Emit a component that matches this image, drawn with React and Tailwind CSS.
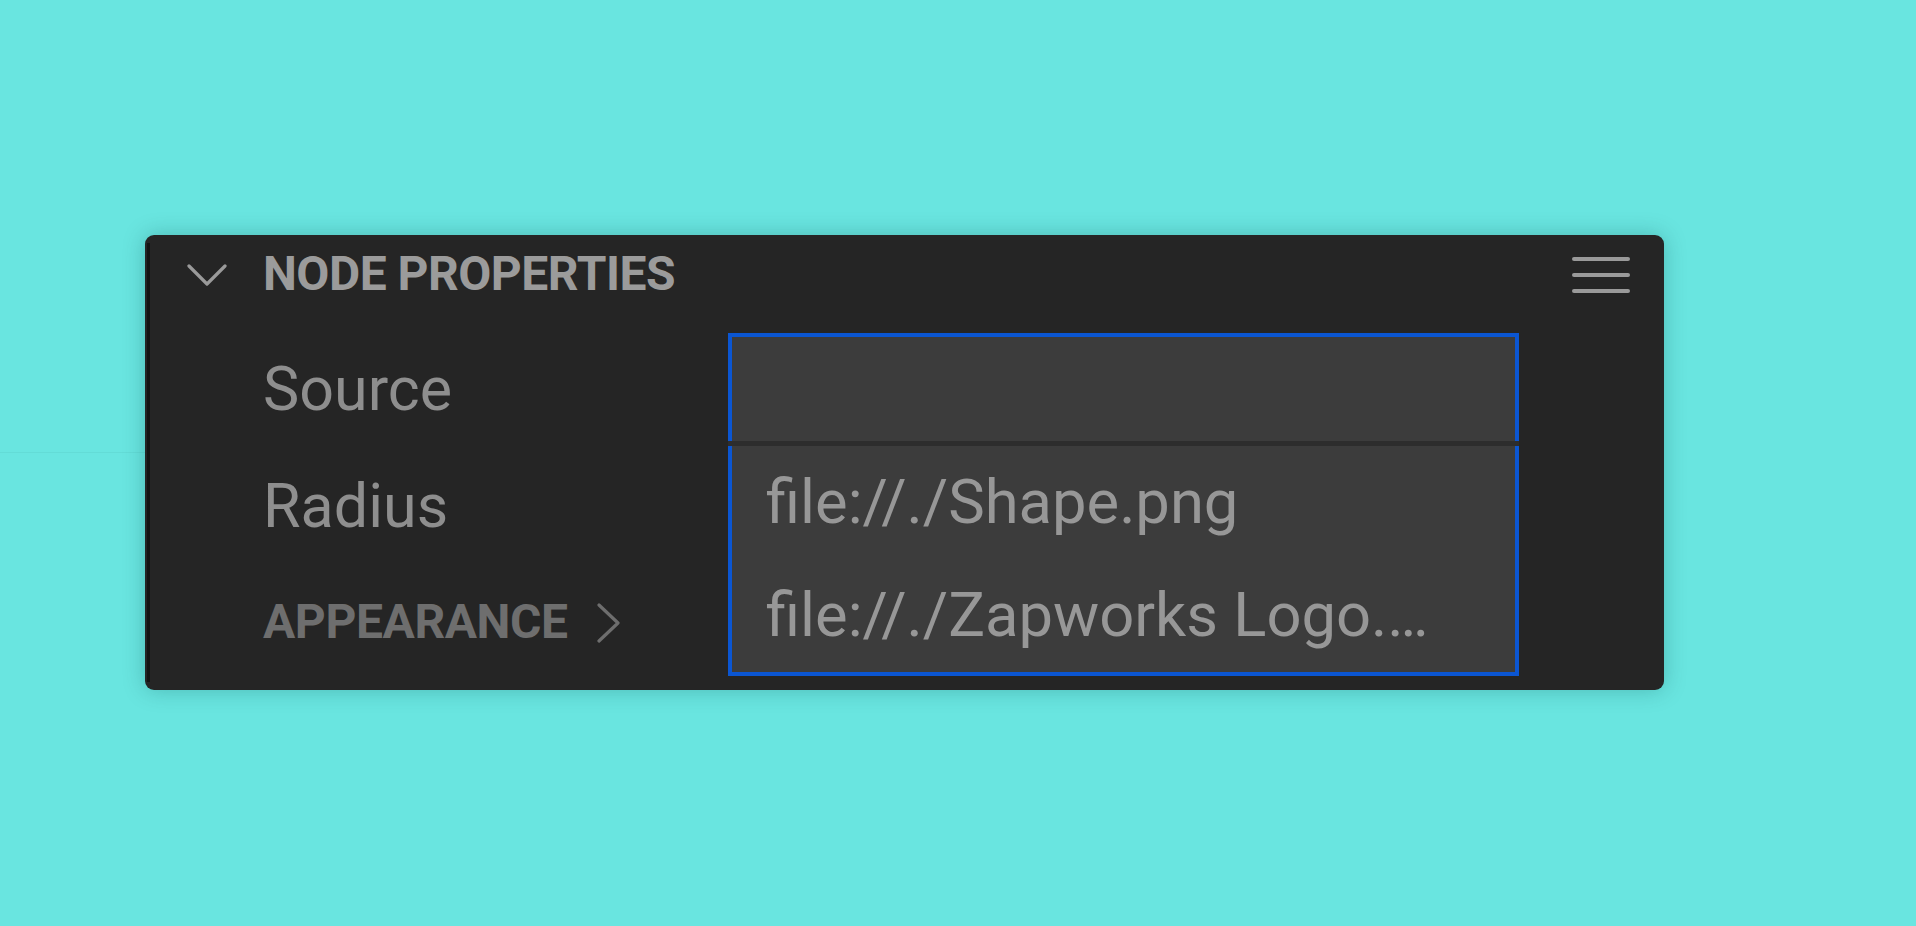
import React from "react";

const ChevronDown = () => (
  <svg width="40" height="24" viewBox="0 0 40 24" fill="none" stroke="#9a9a9a" strokeWidth="3.2" strokeLinecap="round" strokeLinejoin="round">
    <polyline points="2,3 20,21 38,3" />
  </svg>
);

const ChevronRight = () => (
  <svg width="26" height="40" viewBox="0 0 26 40" fill="none" stroke="#6e6e6e" strokeWidth="3.2" strokeLinecap="round" strokeLinejoin="round">
    <polyline points="3,2 22,20 3,38" />
  </svg>
);

const NodeProperties = () => {
  const options = ["file://./Shape.png", "file://./Zapworks Logo.png"];

  return (
    <div className="relative flex w-[1519px] rounded-[9px] bg-[#252525] shadow-[0_0_22px_rgba(0,70,70,0.28)]">
      {/* dark left edge */}
      <div className="my-[8px] ml-[2px] w-[3px] shrink-0 bg-[#141414]" />

      <div className="flex flex-1 flex-col pb-[14px]">
        {/* Header */}
        <div className="flex h-[78px] items-center">
          <div className="ml-[37px] mt-[2px] flex w-[76px] shrink-0">
            <ChevronDown />
          </div>
          <span className="text-[48px] font-bold tracking-[-0.5px] text-[#9b9b9b]">NODE PROPERTIES</span>
          <div className="ml-auto mr-[34px] mt-[2px] flex flex-col gap-[12px]">
            <span className="block h-[4px] w-[58px] rounded-full bg-[#9a9a9a]" />
            <span className="block h-[4px] w-[58px] rounded-full bg-[#9a9a9a]" />
            <span className="block h-[4px] w-[58px] rounded-full bg-[#9a9a9a]" />
          </div>
        </div>

        {/* Source row */}
        <div className="mt-[20px] flex h-[113px] items-center">
          <span className="w-[578px] shrink-0 pl-[113px] text-[61px] text-[#8e8e8e]">Source</span>
          <div className="relative z-10 flex h-full w-[791px] flex-col">
            <div className="h-[108px] border-[4px] border-b-0 border-[#0b56d2] bg-[#3c3c3c]" />
            <div className="h-[5px] bg-[#2d2d2d]" />
            {/* Option list */}
            <div className="absolute left-0 right-0 top-full border-[4px] border-t-0 border-[#0b56d2] bg-[#3c3c3c]">
              {options.map((opt) => (
                <div key={opt} className="flex h-[113px] items-center pl-[34px] pr-[70px]">
                  <span className="truncate text-[61.5px] text-[#979797]">{opt}</span>
                </div>
              ))}
            </div>
          </div>
        </div>

        {/* Radius row */}
        <div className="flex h-[122px] items-center">
          <span className="pl-[113px] text-[61px] text-[#8e8e8e]">Radius</span>
        </div>

        {/* Appearance row */}
        <div className="flex h-[108px] items-center pl-[113px]">
          <span className="text-[48px] font-bold tracking-[-0.4px] text-[#6e6e6e]">APPEARANCE</span>
          <div className="ml-[28px] mt-[2px] flex">
            <ChevronRight />
          </div>
        </div>
      </div>
    </div>
  );
};

export default function App() {
  return (
    <div
      className="relative min-h-screen w-full overflow-hidden bg-[#69e5e0] pl-[145px] pt-[235px]"
      style={{ fontFamily: "Roboto, 'Noto Sans', sans-serif" }}
    >
      <div className="absolute left-0 top-[452px] h-px w-[145px] bg-[#63dcd7]" />
      <NodeProperties />
    </div>
  );
}
